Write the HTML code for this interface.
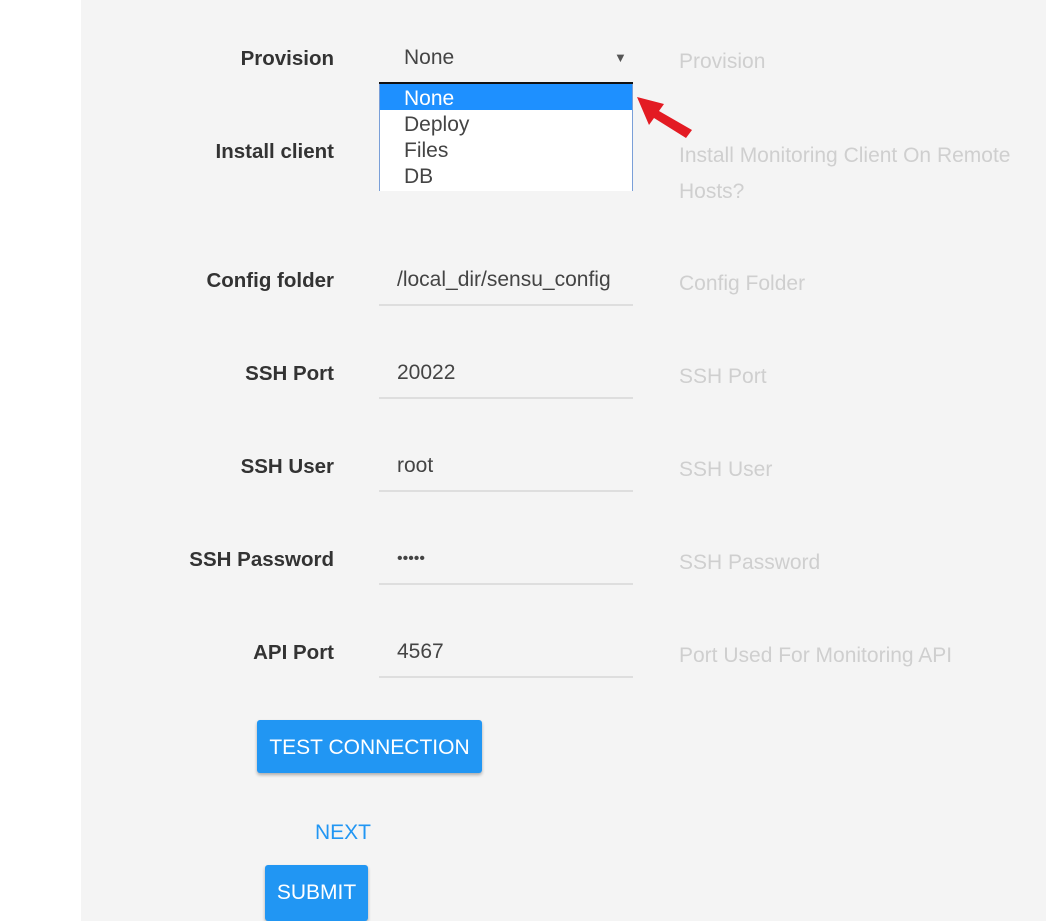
<!DOCTYPE html>
<html><head><style>
body{margin:0;width:1046px;height:921px;background:#fff;font-family:"Liberation Sans",Arial,sans-serif;position:relative;overflow:hidden}
.bg{position:absolute;left:81px;top:0;width:965px;height:921px;background:#f4f4f4}
.l{position:absolute;right:712px;font-weight:bold;font-size:20.5px;color:#333;line-height:22px}
.v{position:absolute;left:397px;font-size:21px;color:#444;line-height:22px}
.u{position:absolute;left:379px;width:254px;height:2px;background:#dedede}
.h{position:absolute;left:679px;font-size:21px;color:#cfcfcf;line-height:22px}
.btn{position:absolute;background:#2196f3;color:#fff;font-size:21px;border-radius:3px;box-shadow:0 2px 3px rgba(0,0,0,.3);text-align:center}
.dd{position:absolute;left:379px;top:84px;width:252px;height:107px;background:#fff;border:1px solid #7a9fd8;border-top:none;border-bottom:none}
.dd div{height:26px;line-height:30px;padding-left:24px;font-size:21px;color:#444}
</style></head><body>
<div class="bg"></div>
<div class="l" style="top:48px">Provision</div>
<div class="v" style="left:404px;top:47px">None</div>
<div style="position:absolute;left:614px;top:50px;font-size:13px;color:#555">▼</div>
<div style="position:absolute;left:379px;top:82px;width:254px;height:2px;background:#111"></div>
<div class="dd"><div style="background:#1e90ff;color:#fff">None</div><div>Deploy</div><div>Files</div><div>DB</div></div>
<svg style="position:absolute;left:634px;top:94px" width="62" height="46"><polygon points="3,3 30,10 25,17 58,36 52,44 20,24 15,31" fill="#e31b23"/></svg>
<div class="h" style="top:51px">Provision</div>
<div class="l" style="top:141px">Install client</div>
<div class="h" style="top:138px;line-height:36px;width:360px">Install Monitoring Client On Remote Hosts?</div>
<div class="l" style="top:270px">Config folder</div><div class="v" style="top:269px">/local_dir/sensu_config</div><div class="u" style="top:304px"></div><div class="h" style="top:273px">Config Folder</div>
<div class="l" style="top:363px">SSH Port</div><div class="v" style="top:362px">20022</div><div class="u" style="top:397px"></div><div class="h" style="top:366px">SSH Port</div>
<div class="l" style="top:456px">SSH User</div><div class="v" style="top:455px">root</div><div class="u" style="top:490px"></div><div class="h" style="top:459px">SSH User</div>
<div class="l" style="top:549px">SSH Password</div><div class="v" style="top:548px;font-size:16px">•••••</div><div class="u" style="top:583px"></div><div class="h" style="top:552px">SSH Password</div>
<div class="l" style="top:642px">API Port</div><div class="v" style="top:641px">4567</div><div class="u" style="top:676px"></div><div class="h" style="top:645px">Port Used For Monitoring API</div>
<div class="btn" style="left:257px;top:720px;width:225px;height:53px;line-height:55px">TEST CONNECTION</div>
<div style="position:absolute;left:315px;top:821px;font-size:21px;color:#2196f3">NEXT</div>
<div class="btn" style="left:265px;top:865px;width:103px;height:56px;line-height:55px">SUBMIT</div>
</body></html>
